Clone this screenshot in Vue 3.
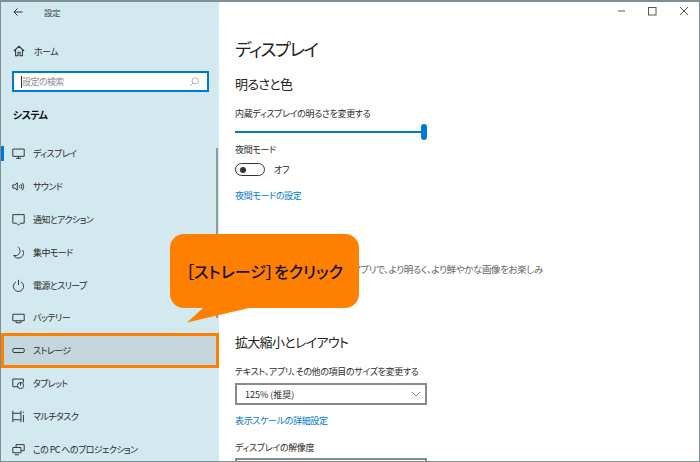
<template>
  <div class="window">
    <aside class="sidebar">
      <div class="top-row">
        <svg class="back" width="10" height="10" viewBox="0 0 10 10"><path d="M9.500 5H.8M4.500 1.500 1 5l3.500 3.500" /></svg>
        <span>設定</span>
      </div>
      <div class="home">
        <svg width="12" height="12" viewBox="0 0 14 14"><path d="M1 7 7 1.500 13 7M3 5.500V12.500H5.800V8.500H8.200V12.500H11V5.500" /></svg>
        <span>ホーム</span>
      </div>
      <div class="search">
        <span class="caret"></span>
        <span class="placeholder">設定の検索</span>
        <svg width="10" height="10" viewBox="0 0 11 11"><circle cx="6.800" cy="4.200" r="3.400" /><path d="M4.400 6.600 1 10" /></svg>
      </div>
      <div class="group">システム</div>
      <nav class="nav">
        <div
          v-for="item in items"
          :key="item.label"
          class="nav-item"
          :class="{ current: item.current, picked: item.picked }"
        >
          <svg width="13" height="13" viewBox="0 0 16 16" v-html="item.icon"></svg>
          <span>{{ item.label }}</span>
        </div>
      </nav>
      <div class="scrollbar"></div>
    </aside>

    <main class="content">
      <div class="controls">
        <svg width="10" height="10" viewBox="0 0 10 10"><path d="M1 5H8" /></svg>
        <svg width="10" height="10" viewBox="0 0 10 10"><rect x=".5" y="1.500" width="7.500" height="7.500" /></svg>
        <svg width="10" height="10" viewBox="0 0 10 10"><path d="M1 1 9 9M9 1 1 9" /></svg>
      </div>
      <h1>ディスプレイ</h1>
      <h2>明るさと色</h2>
      <p class="label first">内蔵ディスプレイの明るさを変更する</p>
      <div class="slider"><span class="thumb"></span></div>
      <p class="label night">夜間モード</p>
      <div class="toggle-row">
        <span class="toggle"><span class="knob"></span></span>
        <span class="off">オフ</span>
      </div>
      <a class="link night-link">夜間モードの設定</a>
      <p class="label hd-text">アプリで、より明るく、より鮮やかな画像をお楽しみ</p>
      <h2 class="scale">拡大縮小とレイアウト</h2>
      <p class="label size">テキスト、アプリ、その他の項目のサイズを変更する</p>
      <div class="select">
        <span>125% (推奨)</span>
        <svg width="10" height="6" viewBox="0 0 12 7"><path d="M1 1 6 6 11 1" /></svg>
      </div>
      <a class="link scale-link">表示スケールの詳細設定</a>
      <p class="label res">ディスプレイの解像度</p>
      <div class="select res-select"></div>
    </main>

    <div class="callout">
      <span>［ストレージ］をクリック</span>
      <svg class="tail" width="64" height="26" viewBox="0 0 64 26"><path d="M16 0 0 14.500 62 0Z" /></svg>
    </div>
  </div>
</template>

<script setup>
const items = [
  { label: 'ディスプレイ', current: true, icon: '<path d="M1 2.500H15V11.500H1ZM8 11.500V14M5 14H11"/>' },
  { label: 'サウンド', icon: '<path d="M1 6H3.500L6.500 3.500V12.500L3.500 10H1ZM9 6.500Q10 8 9 9.500M11 5Q13 8 11 11M13 3.500Q15.800 8 13 12.500"/>' },
  { label: '通知とアクション', icon: '<path d="M1 2H15V12.500H10.500L8 15 5.500 12.500H1Z"/>' },
  { label: '集中モード', icon: '<path d="M7.500 1C10.500 4 10.500 8 8.500 10 6.500 12 4 12.300 2 11.500 3.500 14.500 7 15.500 10 14.500 14 13 15.500 8.500 13 5"/>' },
  { label: '電源とスリープ', icon: '<path d="M8 1V7.500M5 3.500A6.300 6.300 0 1 0 11 3.500"/>' },
  { label: 'バッテリー', icon: '<path d="M1 4H15V12H1ZM5 12V14.500H11V12"/>' },
  { label: 'ストレージ', picked: true, icon: '<rect x="1" y="5.500" width="14" height="5" rx="1.500"/>' },
  { label: 'タブレット', icon: '<path d="M7 12H1V2.500H14V7"/><circle cx="10.500" cy="10.500" r="3.800"/><path d="M10.500 6.700V10.500"/>' },
  { label: 'マルチタスク', icon: '<path d="M1 1V15M11 1V15M1 4H11M1 12H11M14 2V3.500M14 6V15"/>' },
  { label: 'この PC へのプロジェクション', icon: '<path d="M5 5V2H15V9.500H11M1 5.500H11V12H1ZM3.500 14.500H8.500"/>' }
]
</script>

<style>
html, body {
  margin: 0;
  background: #fff;
}
</style>

<style scoped>
.window {
  position: relative;
  display: flex;
  width: 700px;
  height: 462px;
  box-sizing: border-box;
  overflow: hidden;
  border: 1px solid #7f8f95;
  border-top-width: 2px;
  background: #fff;
  color: #2b2b2b;
  font-family: "Noto Sans CJK JP", "Noto Sans", sans-serif;
  font-size: 9px;
  letter-spacing: -0.350px;
  font-feature-settings: "palt";
}

svg {
  fill: none;
  stroke: #333;
  stroke-width: 1;
  flex: none;
}

.nav-item svg,
.home svg {
  stroke-width: 1.200;
}

.sidebar {
  position: relative;
  flex: none;
  width: 218px;
  background: #d3e9f0;
  letter-spacing: -0.600px;
}

.top-row {
  display: flex;
  align-items: center;
  height: 20px;
  padding-left: 12px;
  gap: 21px;
  color: #444;
  font-size: 8.500px;
}

.home {
  display: flex;
  align-items: center;
  gap: 9px;
  height: 22px;
  margin-top: 18px;
  padding-left: 12px;
}

.search {
  display: flex;
  align-items: center;
  height: 21px;
  box-sizing: border-box;
  margin: 9px 10px 0 11px;
  padding: 0 8px 0 7px;
  border: 2px solid #0078d7;
  background: #fff;
}

.caret {
  width: 1px;
  height: 12px;
  background: #333;
}

.placeholder {
  flex: 1;
  color: #8c8c8c;
}

.search svg {
  stroke: #aaa;
}

.group {
  margin-top: 14px;
  padding-left: 12px;
  font-size: 10px;
  font-weight: 700;
  line-height: 18px;
  color: #111;
}

.nav {
  margin-top: 13px;
}

.nav-item {
  position: relative;
  display: flex;
  align-items: center;
  gap: 8px;
  height: 32.900px;
  margin: 0 1px;
  padding-left: 10px;
  box-sizing: border-box;
}

.nav-item.current::before {
  content: "";
  position: absolute;
  left: -1px;
  top: 9px;
  width: 3px;
  height: 15px;
  background: #0078d7;
}

.nav-item.picked {
  background: #c4d7dd;
  outline: 3px solid #ff8000;
  outline-offset: -2px;
  z-index: 1;
}

.scrollbar {
  position: absolute;
  right: 1px;
  top: 146px;
  width: 2px;
  height: 170px;
  background: #8e9ba1;
}

.content {
  flex: 1;
  padding-left: 16px;
  min-width: 0;
}

.controls {
  display: flex;
  justify-content: flex-end;
  align-items: center;
  gap: 21px;
  height: 18px;
  padding-right: 10px;
}

.controls svg {
  stroke: #555;
}

h1 {
  margin: 15px 0 0;
  font-size: 17.500px;
  font-weight: 400;
  letter-spacing: -1.500px;
  line-height: 28px;
  color: #222;
}

h2 {
  margin: 11px 0 0;
  font-size: 13px;
  font-weight: 400;
  letter-spacing: -0.700px;
  line-height: 20px;
  color: #222;
}

.label {
  margin: 0;
  line-height: 14px;
}

.first {
  margin-top: 13px;
}

.slider {
  position: relative;
  width: 189px;
  height: 2px;
  margin-top: 10px;
  background: #0078d7;
}

.thumb {
  position: absolute;
  right: -3px;
  top: -7px;
  width: 6px;
  height: 16px;
  border-radius: 3px;
  background: #0078d7;
}

.night {
  margin-top: 10px;
}

.toggle-row {
  display: flex;
  align-items: center;
  gap: 9px;
  margin-top: 6px;
}

.toggle {
  display: flex;
  align-items: center;
  width: 30px;
  height: 13px;
  box-sizing: border-box;
  padding-left: 4px;
  border: 1.500px solid #333;
  border-radius: 7px;
}

.knob {
  width: 6px;
  height: 6px;
  border-radius: 50%;
  background: #333;
}

.link {
  display: block;
  color: #0078d7;
  line-height: 14px;
}

.night-link {
  margin-top: 13px;
}

.hd-text {
  margin: 59px 0 0 117px;
  color: #666;
  font-size: 9.500px;
  letter-spacing: -0.400px;
}

.scale {
  margin-top: 56px;
}

.size {
  margin-top: 13px;
}

.select {
  display: flex;
  align-items: center;
  justify-content: space-between;
  width: 192px;
  height: 22px;
  box-sizing: border-box;
  margin-top: 4px;
  padding: 0 4px 0 8px;
  border: 2px solid #8a8a8a;
  letter-spacing: 0;
}

.select svg {
  stroke: #666;
}

.scale-link {
  margin-top: 9px;
}

.res {
  margin-top: 13px;
}

.res-select {
  margin-top: 3px;
}

.callout {
  position: absolute;
  left: 169px;
  top: 232px;
  display: flex;
  align-items: center;
  justify-content: center;
  width: 189px;
  height: 74px;
  border-radius: 14px;
  background: #ff8000;
  color: #111;
  font-size: 16px;
  font-weight: 500;
  letter-spacing: 0;
  z-index: 2;
}

.tail {
  position: absolute;
  left: 17px;
  top: 74px;
}

.tail path {
  fill: #ff8000;
  stroke: none;
}
</style>
